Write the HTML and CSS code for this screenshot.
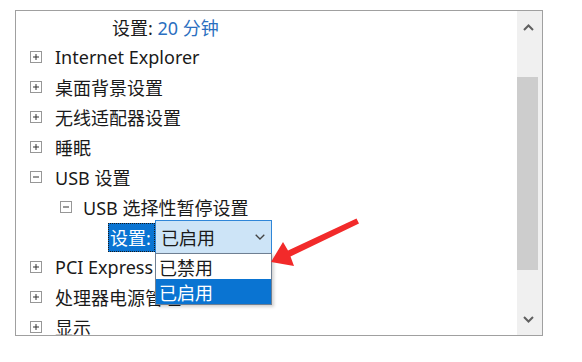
FILE: index.html
```html
<!DOCTYPE html>
<html lang="zh-CN">
<head>
<meta charset="utf-8">
<title>电源选项</title>
<link rel="stylesheet" href="styles.css">
</head>
<body>
<div class="frame">
  <div class="tree">
    <div class="row lvl3"><span class="text">设置: <span class="val">20 分钟</span></span></div>
    <div class="row lvl1"><svg class="exp" viewBox="0 0 12 12"><rect x="0.5" y="0.5" width="11" height="11" fill="#fff" stroke="#979797"/><path d="M3 6h6M6 3v6" stroke="#333" stroke-width="1"/></svg><span class="text">Internet Explorer</span></div>
    <div class="row lvl1"><svg class="exp" viewBox="0 0 12 12"><rect x="0.5" y="0.5" width="11" height="11" fill="#fff" stroke="#979797"/><path d="M3 6h6M6 3v6" stroke="#333" stroke-width="1"/></svg><span class="text">桌面背景设置</span></div>
    <div class="row lvl1"><svg class="exp" viewBox="0 0 12 12"><rect x="0.5" y="0.5" width="11" height="11" fill="#fff" stroke="#979797"/><path d="M3 6h6M6 3v6" stroke="#333" stroke-width="1"/></svg><span class="text">无线适配器设置</span></div>
    <div class="row lvl1"><svg class="exp" viewBox="0 0 12 12"><rect x="0.5" y="0.5" width="11" height="11" fill="#fff" stroke="#979797"/><path d="M3 6h6M6 3v6" stroke="#333" stroke-width="1"/></svg><span class="text">睡眠</span></div>
    <div class="row lvl1"><svg class="exp" viewBox="0 0 12 12"><rect x="0.5" y="0.5" width="11" height="11" fill="#fff" stroke="#979797"/><path d="M3 6h6" stroke="#333" stroke-width="1"/></svg><span class="text">USB 设置</span></div>
    <div class="row lvl2"><svg class="exp" viewBox="0 0 12 12"><rect x="0.5" y="0.5" width="11" height="11" fill="#fff" stroke="#979797"/><path d="M3 6h6" stroke="#333" stroke-width="1"/></svg><span class="text">USB 选择性暂停设置</span></div>
    <div class="row combo-row">
      <span class="sel-label">设置:</span>
      <div class="combo-wrap">
        <div class="combo"><span>已启用</span><svg class="chev" viewBox="0 0 10 6"><path d="M0.7 0.7L5 5L9.3 0.7" fill="none" stroke="#444" stroke-width="1.3"/></svg></div>
        <div class="dropdown">
          <div class="opt">已禁用</div>
          <div class="opt active">已启用</div>
        </div>
      </div>
    </div>
    <div class="row lvl1"><svg class="exp" viewBox="0 0 12 12"><rect x="0.5" y="0.5" width="11" height="11" fill="#fff" stroke="#979797"/><path d="M3 6h6M6 3v6" stroke="#333" stroke-width="1"/></svg><span class="text">PCI Express</span></div>
    <div class="row lvl1"><svg class="exp" viewBox="0 0 12 12"><rect x="0.5" y="0.5" width="11" height="11" fill="#fff" stroke="#979797"/><path d="M3 6h6M6 3v6" stroke="#333" stroke-width="1"/></svg><span class="text">处理器电源管理</span></div>
    <div class="row lvl1"><svg class="exp" viewBox="0 0 12 12"><rect x="0.5" y="0.5" width="11" height="11" fill="#fff" stroke="#979797"/><path d="M3 6h6M6 3v6" stroke="#333" stroke-width="1"/></svg><span class="text">显示</span></div>
  </div>
  <div class="scrollbar">
    <div class="sb-btn"><svg class="sb-chev" viewBox="0 0 11 7"><path d="M1 6L5.5 1.5L10 6" fill="none" stroke="#606060" stroke-width="2"/></svg></div>
    <div class="sb-track"><div class="thumb"></div></div>
    <div class="sb-btn"><svg class="sb-chev" viewBox="0 0 11 7"><path d="M1 1L5.5 5.5L10 1" fill="none" stroke="#606060" stroke-width="2"/></svg></div>
  </div>
</div>
<svg class="annot" viewBox="0 0 582 362" width="582" height="362">
  <polygon points="271,262 283,242 288,250.5 356.5,218.5 359,223.5 290.5,256.5 294,266" fill="#f22a2a"/>
</svg>
</body>
</html>
```

FILE: styles.css
```css
html, body {
  margin: 0;
  padding: 0;
  background: #ffffff;
}
body {
  width: 582px;
  height: 362px;
  overflow: hidden;
  position: relative;
  font-family: "Noto Sans", "Noto Sans CJK SC", sans-serif;
  font-size: 18px;
  color: #1a1a1a;
}
.frame {
  box-sizing: border-box;
  margin: 10px 0 0 15px;
  width: 528px;
  height: 326px;
  border: 1px solid #a0a0a0;
  display: flex;
  overflow: hidden;
}
.tree {
  flex: 1;
  padding-top: 1px;
  overflow: hidden;
}
.row {
  height: 30px;
  display: flex;
  align-items: center;
  white-space: nowrap;
}
.lvl1 { padding-left: 14px; }
.lvl2 { padding-left: 44px; }
.lvl3 { padding-left: 96px; }
.exp {
  width: 12px;
  height: 12px;
  flex: none;
  margin-right: 13px;
}
.lvl2 .exp { margin-right: 11px; }
.val { color: #2b6fc0; }
.combo-row { padding-left: 92px; }
.sel-label {
  box-sizing: border-box;
  height: 29px;
  width: 47px;
  padding-left: 2px;
  display: flex;
  align-items: center;
  background: #0a74d2;
  color: #ffffff;
  outline: 1px dotted #1a1a1a;
  outline-offset: -1px;
  overflow: hidden;
}
.combo-wrap {
  position: relative;
  width: 117px;
}
.combo {
  box-sizing: border-box;
  height: 34px;
  border: 1px solid #2f86d8;
  background: #cde4f7;
  display: flex;
  align-items: center;
  justify-content: space-between;
  padding: 0 6px 0 5px;
}
.chev {
  width: 10px;
  height: 6px;
}
.dropdown {
  position: absolute;
  top: 33px;
  left: 0;
  width: 117px;
  box-sizing: border-box;
  border: 1px solid #6f7f92;
  background: #ffffff;
  box-shadow: 2px 2px 3px rgba(0, 0, 0, 0.18);
}
.opt {
  height: 25px;
  display: flex;
  align-items: center;
  padding-left: 3px;
}
.opt.active {
  background: #0a74d2;
  color: #ffffff;
}
.scrollbar {
  width: 25px;
  flex: none;
  background: #f0f0f0;
  display: flex;
  flex-direction: column;
}
.sb-btn {
  height: 32px;
  display: flex;
  align-items: center;
  justify-content: center;
  padding-right: 3px;
  flex: none;
}
.sb-chev {
  width: 11px;
  height: 7px;
}
.sb-track {
  flex: 1;
}
.thumb {
  margin-top: 34px;
  width: 21px;
  height: 193px;
  background: #cdcdcd;
}
.annot {
  position: absolute;
  left: 0;
  top: 0;
  pointer-events: none;
}
```
